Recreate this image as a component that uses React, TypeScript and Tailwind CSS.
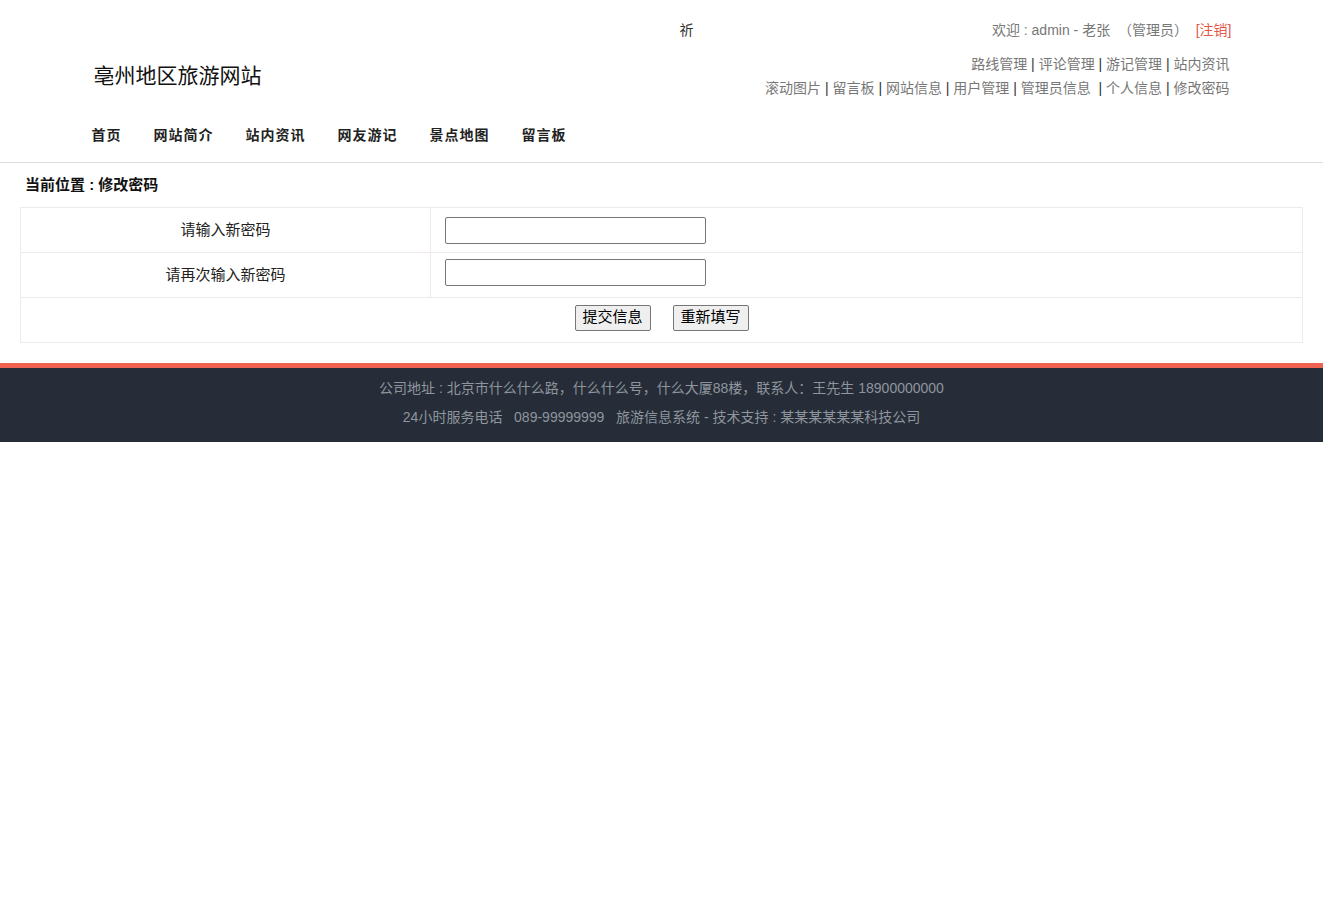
const navItems = ["首页", "网站简介", "站内资讯", "网友游记", "景点地图", "留言板"];

const row1 = ["路线管理", "评论管理", "游记管理", "站内资讯"];
const row2 = ["滚动图片", "留言板", "网站信息", "用户管理", "管理员信息 ", "个人信息", "修改密码"];

const LinkRow = ({ items }: { items: string[] }) => (
  <div className="flex justify-end leading-6 whitespace-pre">
    {items.map((t, i) => (
      <span key={t}>
        {i > 0 && <span className="text-[#333]"> | </span>}
        <a href="#" className="text-[#777]">
          {t}
        </a>
      </span>
    ))}
  </div>
);

const App = () => {
  return (
    <div className="min-h-[914px] bg-white text-[14px] text-[#222] font-['Liberation_Sans','Noto_Sans_CJK_SC',sans-serif]">
      {/* Header */}
      <header className="border-b border-[#ddd]">
        <div className="w-[1140px] mx-auto pt-[18px]">
          <div className="flex items-center justify-between h-6">
            <span className="ml-[588px] text-[#333]">祈</span>
            <div className="text-[#777] whitespace-pre">
              欢迎 : admin - 老张  （管理员）  <a href="#" className="text-[#e4574a]">[注销]</a>
            </div>
          </div>

          <div className="flex items-center justify-between mt-[10px] h-12">
            <h1 className="pl-[2px] text-[21px] text-[#111]">亳州地区旅游网站</h1>
            <div className="pr-[2px]">
              <LinkRow items={row1} />
              <LinkRow items={row2} />
            </div>
          </div>

          <nav className="flex gap-[32px] pt-[23px] h-[62px] leading-6 tracking-[1px] font-bold">
            {navItems.map((n) => (
              <a key={n} href="#" className="text-[#222]">
                {n}
              </a>
            ))}
          </nav>
        </div>
      </header>

      {/* Content */}
      <main className="px-5">
        <div className="mt-[10px] pl-[5px] leading-6 text-[15px] font-bold text-[#111]">当前位置 : 修改密码</div>
        <table className="mt-[10px] w-full border-collapse text-[15px]">
          <tbody>
            <tr className="h-[45px]">
              <td className="w-[32%] border border-[#efe9eb] text-center text-[#222]">请输入新密码</td>
              <td className="border border-[#efe9eb] pl-[14px]">
                <input type="password" className="block w-[261px] h-[27px] border border-[#767676] rounded-[2px] bg-white" />
              </td>
            </tr>
            <tr className="h-[45px]">
              <td className="border border-[#efe9eb] text-center text-[#222]">请再次输入新密码</td>
              <td className="border border-[#efe9eb] pl-[14px] pb-[5px]">
                <input type="password" className="block w-[261px] h-[27px] border border-[#767676] rounded-[2px] bg-white" />
              </td>
            </tr>
            <tr className="h-[45px]">
              <td colSpan={2} className="border border-[#efe9eb]">
                <div className="flex justify-center gap-[22px] pb-[5px]">
                  <button className="w-[76px] h-[26px] text-[15px] text-black bg-[#efefef] border border-[#767676] rounded-[2px]">
                    提交信息
                  </button>
                  <button className="w-[76px] h-[26px] text-[15px] text-black bg-[#efefef] border border-[#767676] rounded-[2px]">
                    重新填写
                  </button>
                </div>
              </td>
            </tr>
          </tbody>
        </table>
      </main>

      {/* Footer */}
      <footer className="mt-[20px] border-t-[5px] border-[#ef6250] bg-[#262d38] pt-[6px] pb-[10px] text-center leading-[29px] text-[#8e959d]">
        <p>公司地址 : 北京市什么什么路，什么什么号，什么大厦88楼，联系人：王先生 18900000000</p>
        <p className="whitespace-pre">24小时服务电话   089-99999999   旅游信息系统 - 技术支持 : 某某某某某某科技公司</p>
      </footer>
    </div>
  );
};

export default App;
